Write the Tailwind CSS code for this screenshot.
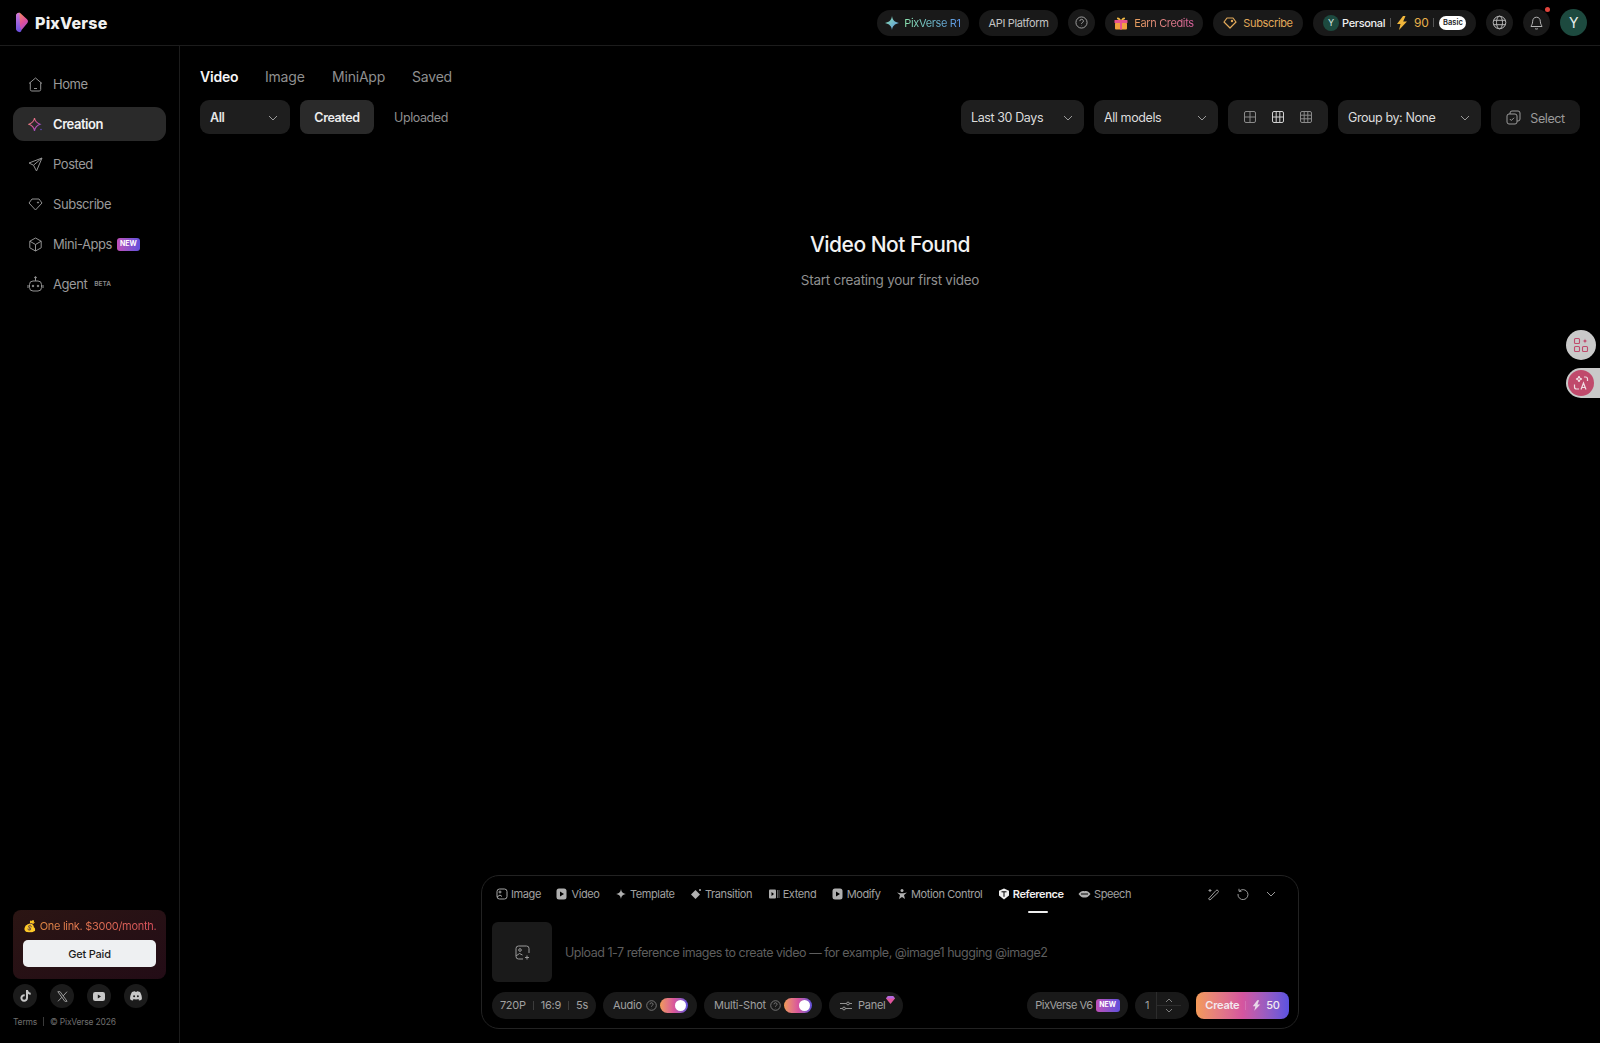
<!DOCTYPE html>
<html>
<head>
    <title>PixVerse</title>
    <script src="https://cdn.jsdelivr.net/npm/@tailwindcss/browser@4"></script>
    <meta name="viewport" content="width=device-width, initial-scale=1.0">
</head>
<body class="bg-black text-white font-['Inter',sans-serif] h-[1043px] w-[1600px] overflow-hidden relative">
    <svg class="absolute w-0 h-0">
        <defs>
            <linearGradient id="sparkGrad" x1="0" y1="0" x2="1" y2="1"><stop offset="0" stop-color="#f59e6b"/><stop offset="0.5" stop-color="#d64f9b"/><stop offset="1" stop-color="#6d50e0"/></linearGradient>
            <linearGradient id="logoGrad" x1="0.2" y1="0" x2="0.8" y2="1"><stop offset="0" stop-color="#f5925c"/><stop offset="0.55" stop-color="#e0509a"/><stop offset="1" stop-color="#a04fd8"/></linearGradient>
            <linearGradient id="logoBand" x1="0" y1="0" x2="0" y2="1"><stop offset="0" stop-color="#d078d8"/><stop offset="1" stop-color="#6a4fe0"/></linearGradient>
            <linearGradient id="r1Grad" x1="0" y1="0" x2="1" y2="1"><stop offset="0" stop-color="#8ee6b0"/><stop offset="1" stop-color="#5a8fe0"/></linearGradient>
        </defs>
    </svg>

    <!-- top bar -->
    <header class="h-[46px] border-b border-[#1c1c1c] flex items-center justify-between pl-[15px] pr-[13px]">
        <div class="flex items-center gap-[6px]">
            <svg width="14" height="21" viewBox="0 0 14 21"><path d="M1 4C1 1.500 3.500 0 5.500 1.300l6.500 6c1.300 1.200 1.300 2.800.2 4L7 17.500C5 19.500 1 19 1 16z" fill="url(#logoGrad)"/><path d="M1 4C1 2 2.500.8 4.500.8L5 14l1.500 4.800c-.4.900-1.400 1.500-2.500 1.300C2 19.800 1 18 1 16z" fill="url(#logoBand)"/></svg>
            <span class="text-[16px] font-extrabold tracking-[0.2px] text-[#f0f0f0]">PixVerse</span>
        </div>
        <div class="flex items-center gap-[10px] text-[11px] leading-[18px] font-normal tracking-[-0.35px]">
            <div class="h-[26px] w-[92px] rounded-full bg-[#191919] flex items-center justify-center gap-[5px]">
                <svg width="14" height="14" viewBox="0 0 14 14"><path d="M7 0c.6 4 2.500 6 7 7-4.500 1-6.400 3-7 7-.6-4-2.500-6-7-7 4.500-1 6.400-3 7-7z" fill="url(#r1Grad)"/></svg>
                <span class="bg-gradient-to-r from-[#8ee6b0] to-[#5a8fe0] bg-clip-text text-transparent">PixVerse R1</span>
            </div>
            <div class="h-[26px] w-[79px] rounded-full bg-[#191919] flex items-center justify-center text-[#c4c4c4]">API Platform</div>
            <div class="size-[27px] rounded-full bg-[#191919] flex items-center justify-center">
                <svg width="13" height="13" viewBox="0 0 14 14" fill="none" stroke="#a8a8a8" stroke-width="1"><circle cx="7" cy="7" r="6"/><path d="M5.200 5.500a1.900 1.900 0 1 1 2.700 1.700c-.6.3-.9.7-.9 1.300M7 10.300v.3"/></svg>
            </div>
            <div class="h-[26px] w-[98px] rounded-full bg-[#191919] flex items-center justify-center gap-[6px]">
                <svg width="14" height="14" viewBox="0 0 14 14"><rect x="1" y="6.500" width="12" height="7" rx="1" fill="#f0a040"/><rect x="0.500" y="4" width="13" height="3" rx=".6" fill="#e8528e"/><rect x="6" y="4" width="2" height="9.500" fill="#e8528e"/><path d="M7 4C5 .5 2.500 1 3 2.800 3.300 3.800 5 4 7 4c2 0 3.700-.2 4-1.200C11.500 1 9 .5 7 4z" fill="#f5b945"/></svg>
                <span class="bg-gradient-to-r from-[#e9a05c] to-[#d85f9c] bg-clip-text text-transparent">Earn Credits</span>
            </div>
            <div class="h-[26px] w-[90px] rounded-full bg-[#191919] flex items-center justify-center gap-[6px] text-[#e2a95a]">
                <svg width="14" height="12" viewBox="0 0 14 12" fill="none" stroke="#e2a95a" stroke-width="1.200"><path d="M4 1h6l3 4-6 6-6-6z" stroke-linejoin="round"/><circle cx="9" cy="4" r=".6" fill="#e2a95a"/></svg>
                <span>Subscribe</span>
            </div>
            <div class="h-[26px] w-[163px] rounded-full bg-[#191919] flex items-center pl-[10px] text-[#efefef]">
                <span class="size-[16px] rounded-full bg-[#1d4a3f] flex items-center justify-center text-[9px] text-[#d8e6e0] mr-[3px]">Y</span>
                <span class="font-medium">Personal</span>
                <span class="w-px h-[9px] bg-[#555] mx-[5px]"></span>
                <svg width="12" height="14" viewBox="0 0 12 14"><path d="M7 0L1 8h3.500L3 14l8-8.500H7.200L9.500 0z" fill="#f0b63c"/></svg>
                <span class="text-[#e8b04a] text-[12px] ml-[6px]">90</span>
                <span class="w-px h-[9px] bg-[#555] mx-[5px]"></span>
                <span class="h-[14px] w-[27px] rounded-full bg-white text-[#222] text-[7.500px] font-semibold tracking-normal flex items-center justify-center">Basic</span>
            </div>
            <div class="size-[27px] rounded-full bg-[#191919] flex items-center justify-center">
                <svg width="15" height="15" viewBox="0 0 15 15" fill="none" stroke="#b5b5b5" stroke-width="1"><circle cx="7.500" cy="7.500" r="6.300"/><ellipse cx="7.500" cy="7.500" rx="3" ry="6.300"/><path d="M1.500 5.300h12M1.500 9.700h12"/></svg>
            </div>
            <div class="size-[27px] rounded-full bg-[#191919] flex items-center justify-center relative">
                <svg width="13" height="14" viewBox="0 0 13 14" fill="none" stroke="#b5b5b5" stroke-width="1"><path d="M6.500 1.200c-2.400 0-3.800 1.800-3.800 4 0 3-1.700 4.500-1.700 5.300h11c0-.8-1.700-2.300-1.700-5.300 0-2.200-1.400-4-3.800-4zM5 12.500c.8.700 2.200.7 3 0"/></svg>
                <span class="absolute -top-[2px] right-[0px] size-[5px] rounded-full bg-[#e0443c]"></span>
            </div>
            <div class="size-[27px] rounded-full bg-[#1d4a3f] flex items-center justify-center text-[14px] text-[#e6efec]">Y</div>
        </div>
    </header>

    <div class="flex h-[997px]">
        <!-- sidebar -->
        <aside class="w-[180px] shrink-0 border-r border-[#1c1c1c] px-[13px] flex flex-col text-[13px] leading-[20px] tracking-[-0.45px] text-[#9a9a9a]">
            <nav class="pt-[21px] flex flex-col gap-[6px]">
                <a class="h-[34px] rounded-[11px] flex items-center pl-[15px] gap-[10px]">
                    <svg width="15" height="15" viewBox="0 0 15 15" fill="none" stroke="#929292" stroke-width="1"><path d="M1 6.500L7.500 1 14 6.500M2.300 5.500V12.500a1.500 1.500 0 0 0 1.500 1.500h7.400a1.500 1.500 0 0 0 1.500-1.500V5.500M6 11.500h3"/></svg>
                    <span>Home</span>
                </a>
                <a class="h-[34px] rounded-[11px] bg-[#2a2a2a] flex items-center pl-[15px] gap-[10px] text-[#f2f2f2] font-semibold">
                    <svg width="15" height="15" viewBox="0 0 15 15" fill="none" stroke="url(#sparkGrad)" stroke-width="1.100"><path d="M6.500 1c.5 3.500 2 5 5.500 6.300C8.500 8.600 7 10 6.500 14 6 10 4.500 8.600 1 7.300 4.500 6 6 4.500 6.500 1z"/><circle cx="13" cy="12.500" r=".7" fill="#6d50e0" stroke="none"/></svg>
                    <span>Creation</span>
                </a>
                <a class="h-[34px] rounded-[11px] flex items-center pl-[15px] gap-[10px]">
                    <svg width="15" height="15" viewBox="0 0 15 15" fill="none" stroke="#929292" stroke-width="1" stroke-linejoin="round"><path d="M14 1L1 6l4.500 2.200L8.500 14zM14 1L5.500 8.200"/></svg>
                    <span>Posted</span>
                </a>
                <a class="h-[34px] rounded-[11px] flex items-center pl-[15px] gap-[10px]">
                    <svg width="15" height="13" viewBox="0 0 15 13" fill="none" stroke="#929292" stroke-width="1" stroke-linejoin="round"><path d="M4 1h7l3 4-6.500 7L1 5z"/><circle cx="10" cy="4.500" r=".6" fill="#929292"/></svg>
                    <span>Subscribe</span>
                </a>
                <a class="h-[34px] rounded-[11px] flex items-center pl-[15px] gap-[10px]">
                    <svg width="15" height="15" viewBox="0 0 15 15" fill="none" stroke="#929292" stroke-width="1" stroke-linejoin="round"><path d="M7.500 1l5.700 3.200v6.600L7.500 14l-5.700-3.200V4.200zM1.800 4.200l5.700 3.300 5.700-3.300M7.500 7.500V14"/></svg>
                    <span>Mini-Apps</span>
                    <span class="-ml-[5px] h-[13px] w-[23px] rounded-[3px] bg-gradient-to-r from-[#c04fb8] to-[#5f4fdc] text-[7px] tracking-normal font-bold text-white flex items-center justify-center">NEW</span>
                </a>
                <a class="h-[34px] rounded-[11px] flex items-center pl-[14px] gap-[9px]">
                    <svg width="17" height="16" viewBox="0 0 17 16" fill="none" stroke="#929292" stroke-width="1"><rect x="2.500" y="5" width="12" height="10" rx="3.500"/><path d="M8.500 5V2M1 9v3M16 9v3"/><circle cx="8.500" cy="1.500" r=".8" fill="#929292"/><circle cx="6" cy="10" r=".8" fill="#929292"/><circle cx="11" cy="10" r=".8" fill="#929292"/></svg>
                    <span>Agent</span>
                    <span class="-ml-[2px] text-[6.500px] tracking-normal font-semibold text-[#8a8a8a]">BETA</span>
                </a>
            </nav>

            <div class="mt-auto h-[69px] rounded-[8px] bg-gradient-to-br from-[#2b1513] to-[#230c16] px-[10px] pt-[6px]">
                <div class="flex items-center gap-[3px] text-[11px] tracking-[-0.3px] whitespace-nowrap">
                    <span class="text-[11px]">💰</span>
                    <span class="bg-gradient-to-r from-[#e58a45] to-[#d94f5c] bg-clip-text text-transparent">One link. $3000/month.</span>
                </div>
                <button class="mt-[4px] w-full h-[27px] rounded-[5px] bg-[#eef0f2] text-[#1c1c1c] text-[11px] tracking-[-0.2px] font-medium">Get Paid</button>
            </div>
            <div class="flex gap-[13px] mt-[5px]">
                <span class="size-[24px] rounded-full bg-[#1b1b1b] flex items-center justify-center">
                    <svg width="11" height="12" viewBox="0 0 11 12"><path d="M6 0h2c.1 1.500 1 2.500 2.700 2.700v2C9.500 4.700 8.700 4.300 8 3.800V8a3.800 3.800 0 1 1-3.300-3.800v2.100A1.800 1.800 0 1 0 6 8z" fill="#c8c8c8"/></svg>
                </span>
                <span class="size-[24px] rounded-full bg-[#1b1b1b] flex items-center justify-center">
                    <svg width="11" height="11" viewBox="0 0 11 11" fill="none" stroke="#9a9a9a" stroke-width="1"><path d="M.8.700h2.300l7 9.600H7.800zM10 .7L6.100 5M4.900 6.200L1 10.300"/></svg>
                </span>
                <span class="size-[24px] rounded-full bg-[#1b1b1b] flex items-center justify-center">
                    <svg width="12" height="9" viewBox="0 0 12 9"><rect width="12" height="9" rx="2.200" fill="#c8c8c8"/><path d="M4.800 2.500L8 4.500 4.800 6.500z" fill="#1b1b1b"/></svg>
                </span>
                <span class="size-[24px] rounded-full bg-[#1b1b1b] flex items-center justify-center">
                    <svg width="12" height="10" viewBox="0 0 12 10"><path d="M2 1c1.200-.6 2.200-.8 2.800-.8l.3.6h1.800l.3-.6c.6 0 1.600.2 2.800.8 1.400 2.300 2 4.600 1.900 7.200-.9.700-1.900 1.200-2.900 1.400L8.400 8.300c.4-.1.800-.3 1.100-.6-1.900 1-5.100 1-7 0 .3.300.7.500 1.100.6L2.900 9.600C1.900 9.400.9 8.900.1 8.200 0 5.600.6 3.300 2 1z" fill="#c8c8c8"/><circle cx="4.100" cy="5.300" r="1" fill="#1b1b1b"/><circle cx="7.900" cy="5.300" r="1" fill="#1b1b1b"/></svg>
                </span>
            </div>
            <div class="flex items-center text-[8.500px] tracking-[-0.2px] text-[#6e6e6e] mt-[8px] mb-[16px] h-[11px]">
                <span>Terms</span>
                <span class="w-px h-[9px] bg-[#3a3a3a] mx-[6px]"></span>
                <span>© PixVerse 2026</span>
            </div>
        </aside>

        <!-- main -->
        <main class="flex-1 flex flex-col px-[20px] relative">
            <div class="flex items-center h-[20px] mt-[20px] text-[14px] tracking-[-0.2px] text-[#8f8f8f]">
                <span class="text-[#f5f5f5] font-semibold w-[65px]">Video</span>
                <span class="w-[67px]">Image</span>
                <span class="w-[80px]">MiniApp</span>
                <span>Saved</span>
            </div>
            <div class="flex items-center mt-[14px] text-[12.500px] leading-[20px] tracking-[-0.4px]">
                <div class="h-[34px] w-[90px] rounded-[9px] bg-[#1e1e1e] flex items-center justify-between pt-[2px] pl-[10px] pr-[12px] font-semibold text-[#e6e6e6]">
                    <span>All</span>
                    <svg width="10" height="6" viewBox="0 0 10 6" fill="none" stroke="#9a9a9a" stroke-width="1"><path d="M1 1l4 4 4-4"/></svg>
                </div>
                <div class="h-[34px] w-[74px] ml-[10px] rounded-[8px] bg-[#2a2a2a] flex items-center justify-center pt-[2px] font-semibold text-[#ececec]">Created</div>
                <div class="ml-[20px] pt-[2px] text-[#8f8f8f]">Uploaded</div>
                <div class="ml-auto flex items-center gap-[10px] text-[#dcdcdc]">
                    <div class="h-[34px] w-[123px] rounded-[9px] bg-[#1e1e1e] flex items-center justify-between pt-[2px] pl-[10px] pr-[11px]">
                        <span>Last 30 Days</span>
                        <svg width="10" height="6" viewBox="0 0 10 6" fill="none" stroke="#9a9a9a" stroke-width="1"><path d="M1 1l4 4 4-4"/></svg>
                    </div>
                    <div class="h-[34px] w-[124px] rounded-[9px] bg-[#1e1e1e] flex items-center justify-between pt-[2px] pl-[10px] pr-[11px]">
                        <span>All models</span>
                        <svg width="10" height="6" viewBox="0 0 10 6" fill="none" stroke="#9a9a9a" stroke-width="1"><path d="M1 1l4 4 4-4"/></svg>
                    </div>
                    <div class="h-[34px] w-[100px] rounded-[9px] bg-[#1e1e1e] flex items-center justify-center gap-[16px]">
                        <svg width="12" height="12" viewBox="0 0 12 12" fill="none" stroke="#8a8a8a" stroke-width="1"><rect x=".5" y=".5" width="11" height="11" rx="1.500"/><path d="M6 .5v11M.5 6h11"/></svg>
                        <svg width="12" height="12" viewBox="0 0 12 12" fill="none" stroke="#d0d0d0" stroke-width="1"><rect x=".5" y=".5" width="11" height="11" rx="1.500"/><path d="M4.200 .5v11M7.800 .5v11M.5 6h11"/></svg>
                        <svg width="12" height="12" viewBox="0 0 12 12" fill="none" stroke="#8a8a8a" stroke-width="1"><rect x=".5" y=".5" width="11" height="11" rx="1.500"/><path d="M4.200 .5v11M7.800 .5v11M.5 4.200h11M.5 7.800h11"/></svg>
                    </div>
                    <div class="h-[34px] w-[143px] rounded-[9px] bg-[#1e1e1e] flex items-center justify-between pt-[2px] pl-[10px] pr-[11px]">
                        <span>Group by: None</span>
                        <svg width="10" height="6" viewBox="0 0 10 6" fill="none" stroke="#9a9a9a" stroke-width="1"><path d="M1 1l4 4 4-4"/></svg>
                    </div>
                    <div class="h-[34px] w-[89px] rounded-[9px] bg-[#191919] flex items-center justify-center gap-[9px] text-[#9a9a9a]">
                        <svg width="15" height="15" viewBox="0 0 15 15" fill="none" stroke="#9a9a9a" stroke-width="1"><rect x="1" y="4" width="10" height="10" rx="2"/><path d="M4 4V3a2 2 0 0 1 2-2h6a2 2 0 0 1 2 2v6a2 2 0 0 1-2 2h-1M3.800 9l1.500 1.500L8 7.800"/></svg>
                        <span class="pt-[3px]">Select</span>
                    </div>
                </div>
            </div>

            <div class="mt-[95px] flex flex-col items-center">
                <h1 class="text-[21px] font-medium tracking-[-0.5px] text-[#f2f2f2] h-[32px] leading-[32px]">Video Not Found</h1>
                <p class="text-[13.500px] tracking-[-0.25px] text-[#8f8f8f] mt-[9px]">Start creating your first video</p>
            </div>

            <!-- prompt panel -->
            <section class="mt-auto mb-[14px] mx-auto w-[818px] h-[154px] rounded-[18px] border border-[#222] pl-[10px] pr-[9px] flex flex-col relative">
                <div class="flex items-center h-[36px] text-[11px] tracking-[-0.4px] text-[#a0a0a0] pl-[4px] gap-[15.500px]">
                    <span class="flex items-center gap-[3px]">
                        <svg width="12" height="12" viewBox="0 0 12 12" fill="none" stroke="#a8a8a8" stroke-width="1"><rect x="1" y="1" width="10" height="10" rx="2.500"/><circle cx="4" cy="4" r="1"/><path d="M1 9l3-2 2 1.500"/></svg>Image</span>
                    <span class="flex items-center gap-[3px]">
                        <svg width="12" height="12" viewBox="0 0 12 12"><rect x=".5" y=".5" width="10" height="11" rx="2.500" fill="#b0b0b0"/><path d="M4 3.500l4 2.500-4 2.500z" fill="#000"/></svg>Video</span>
                    <span class="flex items-center gap-[3px]">
                        <svg width="12" height="12" viewBox="0 0 12 12"><path d="M6 1c.5 3 1.500 4.300 5 5-3.500.7-4.500 2-5 5-.5-3-1.500-4.300-5-5 3.500-.7 4.500-2 5-5z" fill="#b0b0b0"/></svg>Template</span>
                    <span class="flex items-center gap-[3px]">
                        <svg width="12" height="12" viewBox="0 0 12 12"><path d="M5.500 2L10 6.500 5.500 11 1 6.500z" fill="#b0b0b0"/><circle cx="10" cy="2" r="1" fill="#b0b0b0"/></svg>Transition</span>
                    <span class="flex items-center gap-[3px]">
                        <svg width="12" height="12" viewBox="0 0 12 12"><rect x="1" y="1.500" width="7" height="9" rx="1" fill="#b0b0b0"/><path d="M3.500 4l2.500 2-2.500 2z" fill="#000"/><path d="M9.500 2v8M11 2v8" stroke="#777" stroke-width=".8"/></svg>Extend</span>
                    <span class="flex items-center gap-[3px]">
                        <svg width="12" height="12" viewBox="0 0 12 12"><rect x=".5" y=".5" width="10" height="11" rx="2.500" fill="#b0b0b0"/><path d="M4 3.500l4 2.500-4 2.500z" fill="#000"/></svg>Modify</span>
                    <span class="flex items-center gap-[3px]">
                        <svg width="12" height="12" viewBox="0 0 12 12"><circle cx="6" cy="2.500" r="1.500" fill="#b0b0b0"/><path d="M1 4.500l3.500.7h3L11 4.500 8 7l1 4-3-2-3 2 1-4z" fill="#b0b0b0"/></svg>Motion Control</span>
                    <span class="flex items-center gap-[3px] text-[#f0f0f0] font-semibold relative">
                        <svg width="12" height="12" viewBox="0 0 12 12"><path d="M6 .5l5 2.200v4.800L6 11.500 1 7.500V2.700z" fill="#f0f0f0"/><path d="M3.500 3.800h5M6 3.800v5" stroke="#000" stroke-width="1"/></svg>Reference
                        <span class="absolute left-[30px] -bottom-[11px] w-[20px] h-[2px] rounded bg-[#eee]"></span></span>
                    <span class="flex items-center gap-[3px] -ml-[1px]">
                        <svg width="13" height="12" viewBox="0 0 13 12"><path d="M.5 6C2.500 3 4.500 2.500 6.500 3.200 8.500 2.500 10.500 3 12.500 6 10.500 9 8.500 9.500 6.500 9.500S2.500 9 .5 6z" fill="#b0b0b0"/><path d="M3 6h7" stroke="#000" stroke-width="1"/></svg>Speech</span>
                    <div class="ml-auto flex items-center gap-[17px] pr-[13px]">
                        <svg width="13" height="13" viewBox="0 0 13 13" fill="none" stroke="#9a9a9a" stroke-width="1"><path d="M3 12L1.500 11 9 2.500a1.400 1.400 0 0 1 2 2zM3 1v3M1.500 2.500h3"/></svg>
                        <svg width="12" height="12" viewBox="0 0 12 12" fill="none" stroke="#9a9a9a" stroke-width="1"><path d="M2.500 3A5 5 0 1 1 1 6M2 .8V3.300h2.500"/></svg>
                        <svg width="10" height="6" viewBox="0 0 10 6" fill="none" stroke="#9a9a9a" stroke-width="1"><path d="M1 1l4 4 4-4"/></svg>
                    </div>
                </div>
                <div class="flex items-center h-[60px] mt-[10px]">
                    <div class="size-[60px] rounded-[6px] bg-[#1a1a1a] flex items-center justify-center">
                        <svg width="15" height="15" viewBox="0 0 15 15" fill="none" stroke="#9a9a9a" stroke-width="1"><path d="M8 14H3.500A2.500 2.500 0 0 1 1 11.500v-8A2.500 2.500 0 0 1 3.500 1h8A2.500 2.500 0 0 1 14 3.500V8M1 11l3.500-2.500 3 1.500"/><circle cx="5" cy="5" r="1.300"/><path d="M12 10.500v4M10 12.500h4"/></svg>
                    </div>
                    <p class="ml-[13px] pt-[2px] text-[12.500px] tracking-[-0.48px] text-[#5e5e5e]">Upload 1-7 reference images to create video — for example, @image1 hugging @image2</p>
                </div>
                <div class="flex items-center h-[27px] mt-[10px] text-[11px] tracking-[-0.25px] text-[#a0a0a0]">
                    <div class="h-[27px] w-[104px] rounded-full bg-[#191919] flex items-center justify-center">
                        <span>720P</span><span class="w-px h-[9px] bg-[#3c3c3c] mx-[7px]"></span><span>16:9</span><span class="w-px h-[9px] bg-[#3c3c3c] mx-[7px]"></span><span>5s</span>
                    </div>
                    <div class="h-[27px] w-[94px] ml-[7px] rounded-full bg-[#191919] flex items-center pl-[10px]">
                        <span>Audio</span>
                        <svg class="ml-[4px]" width="11" height="11" viewBox="0 0 11 11" fill="none" stroke="#8a8a8a" stroke-width=".8"><circle cx="5.500" cy="5.500" r="4.800"/><path d="M4 4.300a1.500 1.500 0 1 1 2.200 1.300c-.5.300-.7.500-.7 1M5.500 8v.2"/></svg>
                        <span class="ml-[3px] w-[28px] h-[15px] rounded-full bg-gradient-to-r from-[#f09a55] via-[#d9559b] to-[#5f4fdc] relative"><span class="absolute right-[2px] top-[2px] size-[11px] rounded-full bg-white"></span></span>
                    </div>
                    <div class="h-[27px] w-[118px] ml-[7px] rounded-full bg-[#191919] flex items-center pl-[10px]">
                        <span>Multi-Shot</span>
                        <svg class="ml-[4px]" width="11" height="11" viewBox="0 0 11 11" fill="none" stroke="#8a8a8a" stroke-width=".8"><circle cx="5.500" cy="5.500" r="4.800"/><path d="M4 4.300a1.500 1.500 0 1 1 2.200 1.300c-.5.300-.7.500-.7 1M5.500 8v.2"/></svg>
                        <span class="ml-[3px] w-[28px] h-[15px] rounded-full bg-gradient-to-r from-[#f09a55] via-[#d9559b] to-[#5f4fdc] relative"><span class="absolute right-[2px] top-[2px] size-[11px] rounded-full bg-white"></span></span>
                    </div>
                    <div class="h-[27px] w-[74px] ml-[7px] rounded-full bg-[#191919] flex items-center pl-[11px] gap-[6px] relative">
                        <svg width="12" height="10" viewBox="0 0 12 10" fill="none" stroke="#a0a0a0" stroke-width=".9"><path d="M0 2.500h6.500M9.500 2.500H12M0 7.500h2.500M5.500 7.500H12"/><circle cx="8" cy="2.500" r="1.400"/><circle cx="4" cy="7.500" r="1.400"/></svg>
                        <span>Panel</span>
                        <svg class="absolute right-[8px] top-[4px]" width="9" height="8" viewBox="0 0 9 8"><path d="M2 0h5l2 2.500L4.500 8 0 2.500z" fill="#e0559c"/><path d="M2 0h5l2 2.500H0z" fill="#b06ae0"/></svg>
                    </div>
                    <div class="ml-auto h-[27px] w-[101px] rounded-full bg-[#191919] flex items-center justify-center gap-[3px] tracking-[-0.5px]">
                        <span>PixVerse V6</span>
                        <span class="h-[13px] w-[24px] rounded-[3px] bg-gradient-to-r from-[#c04fb8] to-[#5f4fdc] text-[7px] tracking-normal font-bold text-white flex items-center justify-center">NEW</span>
                    </div>
                    <div class="h-[27px] w-[54px] ml-[7px] rounded-full bg-[#191919] flex items-center pl-[10px]">
                        <span class="w-[9px]">1</span>
                        <span class="ml-[2px] w-px h-[27px] bg-[#2c2c2c]"></span>
                        <span class="relative w-[24px] h-[27px] flex flex-col items-center justify-between py-[6px]">
                            <svg width="8" height="5" viewBox="0 0 8 5" fill="none" stroke="#8a8a8a" stroke-width=".9"><path d="M1 4l3-3 3 3"/></svg>
                            <span class="absolute left-0 right-0 top-[13px] h-px bg-[#2c2c2c]"></span>
                            <svg width="8" height="5" viewBox="0 0 8 5" fill="none" stroke="#8a8a8a" stroke-width=".9"><path d="M1 1l3 3 3-3"/></svg>
                        </span>
                    </div>
                    <div class="h-[27px] w-[93px] ml-[7px] rounded-[8px] bg-gradient-to-r from-[#f39a58] via-[#d5559f] to-[#5b52e0] flex items-center justify-center text-[#f3eaf0] font-semibold">
                        <span>Create</span>
                        <span class="w-px h-[9px] bg-white/15 mx-[6px]"></span>
                        <svg width="9" height="11" viewBox="0 0 12 14"><path d="M7 0L1 8h3.500L3 14l8-8.500H7.200L9.500 0z" fill="#e8d8e8"/></svg>
                        <span class="ml-[5px] font-medium">50</span>
                    </div>
                </div>
            </section>
        </main>
    </div>

    <!-- floating side buttons -->
    <div class="absolute left-[1566px] top-[330px] size-[30px] rounded-full bg-[#c9c9c9] flex items-center justify-center">
        <svg width="16" height="16" viewBox="0 0 16 16" fill="none" stroke="#c04a6c" stroke-width="1.100"><rect x="1.500" y="1.500" width="5" height="5" rx="1"/><rect x="1.500" y="9.500" width="5" height="5" rx="1"/><rect x="9.500" y="9.500" width="5" height="5" rx="1"/><path d="M12 1.500c.2 1.600 1 2.300 2.500 2.500-1.500.2-2.300 1-2.500 2.500-.2-1.500-1-2.300-2.500-2.500 1.500-.2 2.300-.9 2.500-2.500z" fill="#c04a6c" stroke="none"/></svg>
    </div>
    <div class="absolute left-[1566px] top-[368px] w-[34px] h-[30px] rounded-l-full bg-[#c9c9c9] flex items-center pl-[2px]">
        <span class="size-[26px] rounded-full bg-[#c04a6c] flex items-center justify-center">
            <svg width="16" height="16" viewBox="0 0 16 16" fill="none" stroke="#f0dde3" stroke-width="1.200"><path d="M6 1c.2 2 1 2.800 3 3-2 .2-2.800 1-3 3-.2-2-1-2.800-3-3 2-.2 2.800-1 3-3zM8 14.500l2.500-6.500 2.500 6.500M9 12.500h3M1.500 9.500v2.500a2 2 0 0 0 2 2H6M11 2h1.500a2 2 0 0 1 2 2v2"/></svg>
        </span>
    </div>
</body>
</html>
